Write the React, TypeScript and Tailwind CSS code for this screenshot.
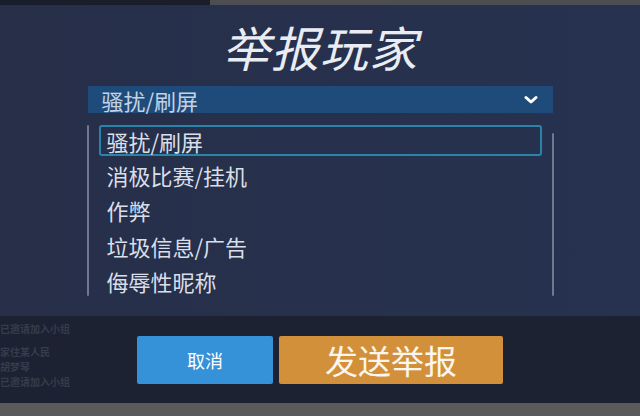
import React from "react";

const items = ["骚扰/刷屏", "消极比赛/挂机", "作弊", "垃圾信息/广告", "侮辱性昵称"];

export default function App() {
  return (
    <div
      className="w-[640px] h-[416px] flex flex-col overflow-hidden bg-[#1c2232]"
      style={{ fontFamily: '"Noto Sans CJK SC", "Noto Sans", sans-serif' }}
    >
      <div className="h-[5px] flex shrink-0">
        <div className="w-[210px] bg-[#1a1e2a]" />
        <div className="flex-1 bg-[#4d4e52]" />
      </div>
      <div className="h-[311px] shrink-0 bg-gradient-to-r from-[#272f49] to-[#263250] flex flex-col items-center">
        <div className="mt-[17px] text-[48px] leading-none italic text-[#e9edf3] tracking-[1px]">举报玩家</div>
        <div className="mt-[16px] w-[465px] h-[27px] bg-[#1f4b7b] flex items-center justify-between pl-[14px] pr-[15px] shrink-0">
          <span className="text-[22px] leading-none text-[#c4d3e3]">骚扰/刷屏</span>
          <svg width="14" height="10" viewBox="0 0 14 10">
            <polyline points="2,2.5 7,7 12,2.5" fill="none" stroke="#ffffff" strokeWidth="3" strokeLinecap="round" strokeLinejoin="round" />
          </svg>
        </div>
        <div className="mt-[11px] w-[467px] flex">
          <div className="w-[2px] mt-[1px] h-[171px] bg-[#6f788e] rounded-full" />
          <div className="flex-1 flex flex-col pl-[10px] pr-[10px]">
            {items.map((t, i) =>
              i === 0 ? (
                <div key={t} className="h-[33px] flex items-center">
                  <div className="w-full h-[31px] border-[2px] border-[#2a84aa] rounded-[3px] flex items-center pl-[6px]">
                    <span className="text-[22px] leading-none text-[#d9dfe8]">{t}</span>
                  </div>
                </div>
              ) : (
                <div key={t} className="h-[35.5px] flex items-center">
                  <span className="pl-[8px] text-[22px] leading-none text-[#d9dfe8]">{t}</span>
                </div>
              )
            )}
          </div>
          <div className="w-[2px] mt-[9px] h-[163px] bg-[#6f788e] rounded-full" />
        </div>
      </div>
      <div className="h-[87px] shrink-0 flex">
        <div className="w-[137px] flex flex-col pt-[5px] text-[10px] leading-[15px] text-[#353c4b] font-bold">
          <span>已邀请加入小组</span>
          <span className="mt-[8px]">家住某人民</span>
          <span>胡梦琴</span>
          <span>已邀请加入小组</span>
        </div>
        <div className="mt-[20px] w-[136px] h-[48px] bg-[#3592d9] rounded-[2px] flex items-center justify-center">
          <span className="text-[18px] leading-none text-white">取消</span>
        </div>
        <div className="mt-[20px] ml-[6px] w-[224px] h-[48px] bg-[#d3903a] rounded-[2px] flex items-center justify-center">
          <span className="text-[33px] leading-none text-[#fbf6ee]">发送举报</span>
        </div>
      </div>
      <div className="flex-1 bg-[#5b5a5b]" />
    </div>
  );
}
